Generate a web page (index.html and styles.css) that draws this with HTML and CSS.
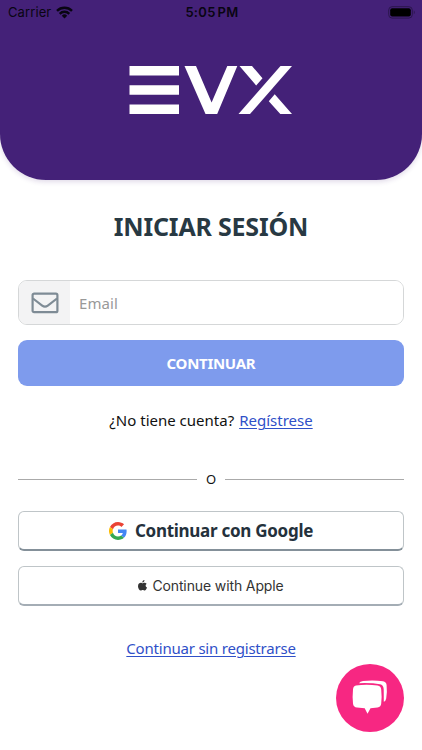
FILE: index.html
```
<!doctype html>
<html lang="es">
	<head>
		<meta charset="utf-8"/>
		<meta name="viewport" content="width=device-width, initial-scale=1"/>
		<title>EVX - Iniciar sesión</title>
		<link rel="stylesheet" href="styles.css">
	</head>

	<body>
		<header class="top">
			<div class="status">
				<div class="carrier">
					<span>Carrier</span>
					<svg width="17" height="13" viewBox="0 0 17 13" fill="none" stroke="#090512" stroke-width="2.4">
						<path d="M1 4.8a10.6 10.6 0 0 1 15 0"/>
						<path d="M3.7 7.8a6.8 6.8 0 0 1 9.6 0"/>
						<path d="M8.5 12.4L5.8 9.7a3.8 3.8 0 0 1 5.4 0z" fill="#090512" stroke="none"/>
					</svg>
				</div>
				<div class="clock">5:05 PM</div>
				<div class="battery">
					<svg width="28" height="13" viewBox="0 0 28 13">
						<rect x=".7" y=".7" width="23.6" height="11.4" rx="3.4" fill="none" stroke="#2b164d"/>
						<rect x="2.2" y="2.2" width="20.6" height="8.4" rx="2" fill="#000"/>
						<path d="M25.8 4.6c1.3.5 1.3 3.1 0 3.6z" fill="#2b164d"/>
					</svg>
				</div>
			</div>
			<svg class="logo" width="164" height="50" viewBox="0 0 164 50" fill="#fff">
				<path d="M.5 1H50v9.5H.5zM.5 20.2H50v9.6H.5zM.5 39.4H50V49H.5z"/>
				<path d="M55.5 1H67l15.6 36.5L98.300 1h10L88.200 49H76.500z"/>
				<path d="M151.500 1H163l-42 48h-11.500z"/>
				<path d="M110.500 1H123l10.500 12.300-6.300 7.200zM145.700 29.200L163 49h-11.700l-11.500-12.800z"/>
			</svg>
		</header>

		<main>
			<h1><span>INICIAR SESIÓN</span></h1>

			<form class="login">
				<label class="field">
					<span class="field-icon">
						<svg width="28" height="22" viewBox="0 0 28 22" fill="none" stroke="#7e8b95" stroke-width="2.2" stroke-linejoin="round">
							<rect x="1.6" y="1.6" width="24.8" height="18.6" rx="1.5"/>
							<path d="M2 6.500l9.200 7.100q2.800 2.100 5.600 0L26 6.500"/>
						</svg>
					</span>
					<input type="email" placeholder="Email">
				</label>
				<button type="button" class="submit"><span>CONTINUAR</span></button>
			</form>

			<p class="signup"><span class="question">¿No tiene cuenta?</span><a href="#">Regístrese</a></p>

			<div class="divider"><span>O</span></div>

			<button type="button" class="social google">
				<svg width="18" height="18" viewBox="0 0 48 48">
					<path fill="#EA4335" d="M24 9.5c3.5 0 6.7 1.2 9.2 3.6l6.9-6.9C35.9 2.4 30.5 0 24 0 14.6 0 6.5 5.4 2.6 13.2l8 6.2C12.4 13.7 17.7 9.5 24 9.5z"/>
					<path fill="#4285F4" d="M47 24.6c0-1.6-.2-3.1-.4-4.6H24v9h12.9c-.6 3-2.2 5.5-4.7 7.2l7.7 6C44.4 38 47 31.8 47 24.6z"/>
					<path fill="#FBBC05" d="M10.5 28.6A14.5 14.5 0 0 1 10.5 19.4l-7.9-6.2a24 24 0 0 0 0 21.6z"/>
					<path fill="#34A853" d="M24 48c6.5 0 11.9-2.1 15.9-5.8l-7.7-6c-2.2 1.5-4.9 2.3-8.2 2.3-6.3 0-11.6-4.2-13.5-9.9l-7.9 6.2C6.5 42.6 14.6 48 24 48z"/>
				</svg>
				<span>Continuar con Google</span>
			</button>

			<button type="button" class="social apple">
				<svg width="9" height="11" viewBox="0 0 18 22" fill="#333">
					<path d="M12.9 0c.2 2.6-1.9 4.9-4.2 4.8C8.4 2.4 10.6.3 12.9 0zM17.3 7.4c-3.1 1.9-2.7 6.2.7 7.5-.8 2.5-2.7 6.2-4.8 6.2-1.5 0-2-.9-3.8-.9s-2.4.9-3.8.9C2.9 21.1 0 16.3 0 12.3c0-6.3 5.3-7.6 7.6-6.4 1.2.5 1.8.5 3 0 2.2-1 5-.5 6.7 1.5z"/>
				</svg>
				<span>Continue with Apple</span>
			</button>

			<p class="skip"><a href="#">Continuar sin registrarse</a></p>
		</main>

		<button type="button" class="chat" aria-label="Chat">
			<svg width="36" height="36" viewBox="0 0 36 36">
				<path d="M7 3.2Q8 1.3 11 1.1 21 0 31 1.3 34.2 1.7 34.6 5 35.3 12 34.2 18.5 33.8 21 31.8 21.7L31.7 9Q31.4 5 28 4.2 20 2.8 7 3.2z" fill="#fff"/>
				<path d="M4 5.5Q14.5 4.2 25.5 5.5 29 6 29.2 9.5 30 16.5 29.2 23.5 29 27 25.5 27.6L18.5 28.3 15.5 33.8 12.7 28.3 5 27.6Q1.3 27.2 1 23.5.3 16.5 1 9.5 1.2 6 4 5.5z" fill="#fff"/>
			</svg>
		</button>
	</body>
</html>
```
FILE: styles.css
```
* {
	box-sizing: border-box;
}

body {
	margin: 0;
	height: 750px;
	overflow: hidden;
	background-color: #fff;
	font-family: "Noto Sans", "Open Sans", sans-serif;
	color: #111;
}

h1, p {
	margin: 0;
}

button {
	font-family: inherit;
	padding: 0;
	cursor: pointer;
}

svg {
	display: block;
	flex: none;
}

a {
	color: #2f50c8;
	text-decoration: underline;
	text-decoration-thickness: 1px;
	text-underline-offset: 2px;
}

.top {
	height: 180px;
	background-color: #442178;
	border-radius: 0 0 46px 46px;
	box-shadow: 0 2px 5px rgba(68, 33, 120, 0.16);
}

.status {
	display: grid;
	grid-template-columns: 1fr auto 1fr;
	align-items: center;
	height: 24px;
	padding: 0 6px 0 8px;
	font-family: Inter, sans-serif;
	font-size: 13px;
	color: #090512;
}

.carrier {
	display: flex;
	align-items: center;
	gap: 5px;
	letter-spacing: 0.1px;
}

.clock {
	font-weight: 600;
	letter-spacing: 0.3px;
	word-spacing: -1.6px;
}

.battery {
	justify-self: end;
}

.logo {
	margin: 41px auto 0 129px;
}

main {
	display: flex;
	flex-direction: column;
	padding: 0 18px;
}

h1 {
	height: 36px;
	margin-top: 28px;
	line-height: 36px;
	font-size: 25px;
	font-weight: 700;
	letter-spacing: -0.2px;
	text-align: center;
	color: #283943;
}

.login {
	display: flex;
	flex-direction: column;
	gap: 15px;
	margin-top: 36px;
}

.field {
	display: flex;
	height: 45px;
	border: 1px solid #d5d7d8;
	border-radius: 9px;
	overflow: hidden;
}

.field-icon {
	display: flex;
	align-items: center;
	justify-content: center;
	width: 51px;
	background-color: #f3f3f4;
}

.field input {
	flex: 1;
	min-width: 0;
	padding: 1px 9px 0;
	border: 0;
	outline: 0;
	font-family: inherit;
	font-size: 15px;
	letter-spacing: 0.1px;
}

.field input::placeholder {
	color: #999;
}

.submit {
	height: 46px;
	border: 0;
	border-radius: 9px;
	background-color: #7e9bed;
	color: #fff;
	font-size: 15px;
	font-weight: 700;
	letter-spacing: -0.3px;
}

.signup {
	display: flex;
	justify-content: center;
	gap: 5px;
	height: 24px;
	margin-top: 22px;
	line-height: 24px;
	font-size: 15px;
}

.divider {
	display: flex;
	align-items: center;
	gap: 9px;
	height: 20px;
	margin-top: 37px;
	font-size: 13px;
}

.divider::before,
.divider::after {
	content: "";
	flex: 1;
	height: 1px;
	background-color: #aaa;
}

.social {
	display: flex;
	align-items: center;
	justify-content: center;
	height: 40px;
	border: 1px solid #bfc5c8;
	border-bottom: 2px solid #849099;
	border-radius: 6px;
	background-color: #fff;
}

.google {
	gap: 8px;
	margin-top: 22px;
	font-size: 17px;
	font-weight: 700;
	letter-spacing: -0.28px;
	color: #24313c;
}

.apple {
	gap: 5px;
	margin-top: 15px;
	border-bottom-color: #a4adb5;
	font-family: Inter, sans-serif;
	font-size: 14px;
	letter-spacing: -0.12px;
	color: #333;
}

.skip {
	height: 24px;
	margin-top: 30px;
	line-height: 24px;
	font-size: 15px;
	letter-spacing: -0.21px;
	text-align: center;
}

.chat {
	position: fixed;
	right: 18px;
	bottom: 18px;
	display: flex;
	align-items: center;
	justify-content: center;
	width: 68px;
	height: 68px;
	border: 0;
	border-radius: 50%;
	background-color: #f72782;
}
```
